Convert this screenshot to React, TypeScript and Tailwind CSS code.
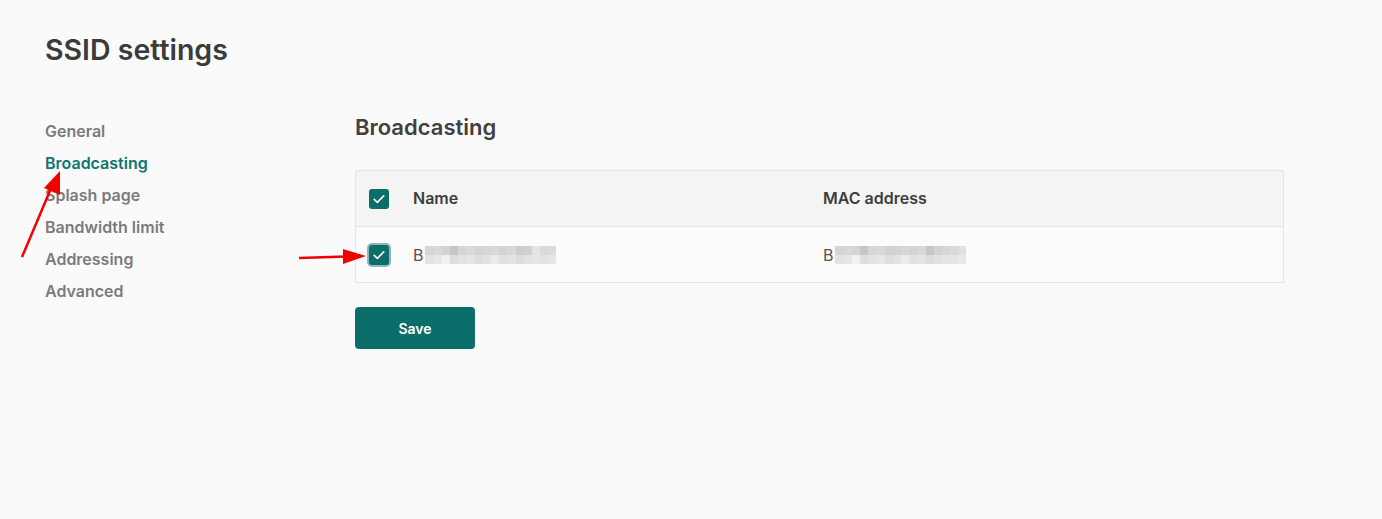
const navItems = [
  "General",
  "Broadcasting",
  "Splash page",
  "Bandwidth limit",
  "Addressing",
  "Advanced",
];

const nameBlur = [
  ["bg-[#d6d6d6]", "bg-[#d9d9d9]", "bg-[#d2d2d2]", "bg-[#c6c6c6]", "bg-[#d6d6d6]", "bg-[#d9d9d9]", "bg-[#d4d4d4]", "bg-[#d6d6d6]", "bg-[#d8d8d8]", "bg-[#d3d3d3]", "bg-[#d8d8d8]", "bg-[#cdcdcd]", "bg-[#d0d0d0]", "bg-[#e4e4e4]", "bg-[#dadada]", "bg-[#dcdcdc]"],
  ["bg-[#e3e3e3]", "bg-[#e7e7e7]", "bg-[#f1f1f1]", "bg-[#dedede]", "bg-[#e2e2e2]", "bg-[#e5e5e5]", "bg-[#dddddd]", "bg-[#e2e2e2]", "bg-[#ebebeb]", "bg-[#e1e1e1]", "bg-[#e4e4e4]", "bg-[#dddddd]", "bg-[#e2e2e2]", "bg-[#e6e6e6]", "bg-[#e2e2e2]", "bg-[#e6e6e6]"],
];

const macBlur = [
  ["bg-[#d4d4d4]", "bg-[#d9d9d9]", "bg-[#d4d4d4]", "bg-[#c6c6c6]", "bg-[#d6d6d6]", "bg-[#d8d8d8]", "bg-[#d2d2d2]", "bg-[#d3d3d3]", "bg-[#d6d6d6]", "bg-[#d3d3d3]", "bg-[#d8d8d8]", "bg-[#c7c7c7]", "bg-[#d2d2d2]", "bg-[#d6d6d6]", "bg-[#d9d9d9]", "bg-[#e0e0e0]"],
  ["bg-[#e2e2e2]", "bg-[#e6e6e6]", "bg-[#f1f1f1]", "bg-[#dedede]", "bg-[#e3e3e3]", "bg-[#e6e6e6]", "bg-[#dddddd]", "bg-[#e2e2e2]", "bg-[#ececec]", "bg-[#e1e1e1]", "bg-[#e4e4e4]", "bg-[#dddddd]", "bg-[#e2e2e2]", "bg-[#e5e5e5]", "bg-[#e4e4e4]", "bg-[#e8e8e8]"],
];

const Blurred = ({ rows }: { rows: string[][] }) => (
  <div className="flex flex-col ml-[2px]">
    {rows.map((row, i) => (
      <div key={i} className="flex">
        {row.map((c, j) => (
          <div key={j} className={`w-[8.2px] h-[9px] ${c}`} />
        ))}
      </div>
    ))}
  </div>
);

const Check = ({ focused }: any) => (
  <div
    className={
      focused
        ? "w-6 h-6 rounded-[5px] bg-[#8bb9b7] flex items-center justify-center"
        : "w-6 h-6 flex items-center justify-center"
    }
  >
    <div className="w-5 h-5 rounded-[3px] bg-[#0b6e6b] flex items-center justify-center">
      <svg width="14" height="14" viewBox="0 0 14 14" fill="none">
        <path
          d="M2.2 7.4 L5.4 10.4 L11.8 3.8"
          stroke="white"
          strokeWidth="1.6"
          strokeLinecap="round"
          strokeLinejoin="round"
        />
      </svg>
    </div>
  </div>
);

export default function App() {
  return (
    <div
      className="relative w-[1382px] h-[519px] bg-[#fafafa] text-[#3d3d3d] overflow-hidden"
      style={{ fontFamily: "Inter, 'Noto Sans', sans-serif" }}
    >
      <div className="px-[45px] pt-[30px]">
        <h1 className="text-[28.5px] leading-[40px] font-semibold text-[#3b3b3b]">
          SSID settings
        </h1>

        <div className="flex mt-[45px]">
          <nav className="w-[310px] flex flex-col">
            {navItems.map((item) => (
              <div
                key={item}
                className={
                  item === "Broadcasting"
                    ? "h-8 flex items-center text-[16px] font-semibold text-[#0e7470]"
                    : "h-8 flex items-center text-[16px] font-semibold text-[#7b7b7b]"
                }
              >
                {item}
              </div>
            ))}
          </nav>

          <div className="flex-1 max-w-[929px]">
            <h2 className="text-[22px] leading-[26px] font-semibold text-[#404040] mt-[-1px]">
              Broadcasting
            </h2>

            <div className="mt-[30px] border border-[#e6e6e6]">
              <div className="h-[56px] bg-[#f4f4f4] border-b border-[#e6e6e6] flex items-center text-[16px] font-semibold text-[#3d3d3d]">
                <div className="w-[57px] pl-[11px]">
                  <Check />
                </div>
                <div className="w-[410px] mt-[-1px]">Name</div>
                <div className="mt-[-1px]">MAC address</div>
              </div>
              <div className="h-[55px] bg-[#fbfbfb] flex items-center text-[16px] text-[#555]">
                <div className="w-[57px] pl-[11px]">
                  <Check focused />
                </div>
                <div className="w-[410px] flex items-center">
                  <span>B</span>
                  <Blurred rows={nameBlur} />
                </div>
                <div className="flex items-center">
                  <span>B</span>
                  <Blurred rows={macBlur} />
                </div>
              </div>
            </div>

            <button className="mt-[24px] w-[120px] h-[42px] rounded-[4px] bg-[#0b6e6b] text-white text-[14px] font-semibold">
              Save
            </button>
          </div>
        </div>
      </div>

      <svg
        className="absolute left-0 top-0 pointer-events-none"
        width="1382"
        height="519"
      >
        <line x1="22" y1="257" x2="52" y2="186" stroke="#f00000" strokeWidth="2.5" />
        <polygon points="60,171 44,188 60,195" fill="#f00000" />
        <line x1="299" y1="258" x2="346" y2="256.5" stroke="#f00000" strokeWidth="2.5" />
        <polygon points="343,249 366,256 343,264" fill="#f00000" />
      </svg>
    </div>
  );
}
